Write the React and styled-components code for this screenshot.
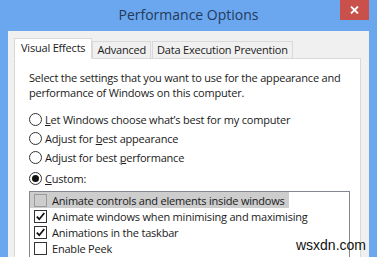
import React from 'react';
import styled, { createGlobalStyle } from 'styled-components';

const GlobalStyle = createGlobalStyle`
  html, body {
    margin: 0;
    padding: 0;
    background: #6aa7ef;
  }
  body {
    font-family: "Open Sans", "Noto Sans", sans-serif;
  }
`;

const tabs = [
  { name: 'Visual Effects', active: true },
  { name: 'Advanced' },
  { name: 'Data Execution Prevention' },
];

const radios = [
  { pre: '', key: 'L', post: 'et Windows choose what\u2019s best for my computer' },
  { pre: 'Adjust for ', key: 'b', post: 'est appearance' },
  { pre: 'Adjust for best ', key: 'p', post: 'erformance' },
  { pre: '', key: 'C', post: 'ustom:', checked: true },
];

const effects = [
  { label: 'Animate controls and elements inside windows', selected: true },
  { label: 'Animate windows when minimising and maximising', checked: true },
  { label: 'Animations in the taskbar', checked: true },
  { label: 'Enable Peek' },
];

function App() {
  return (
    <Window>
      <GlobalStyle />
      <TitleBar>
        <span />
        <Title>Performance Options</Title>
        <CloseButton>
          <svg width="9" height="8" viewBox="0 0 9 8">
            <path d="M1 0.5 L8 7.5 M8 0.5 L1 7.5" stroke="#fff" strokeWidth="1.8" />
          </svg>
        </CloseButton>
      </TitleBar>
      <Client>
        <TabStrip>
          {tabs.map((t) => (
            <Tab key={t.name} $active={t.active}>{t.name}</Tab>
          ))}
        </TabStrip>
        <Panel>
          <Description>
            Select the settings that you want to use for the appearance and
            performance of Windows on this computer.
          </Description>
          <RadioList>
            {radios.map((r, i) => (
              <RadioRow key={i} $last={i === radios.length - 1}>
                <Radio $checked={r.checked} />
                <span>
                  {r.pre}<u>{r.key}</u>{r.post}
                </span>
              </RadioRow>
            ))}
          </RadioList>
          <ListBox>
            {effects.map((e) => (
              <ListItem key={e.label} $selected={e.selected}>
                <CheckBox $selected={e.selected}>
                  {e.checked && (
                    <svg width="11" height="11" viewBox="0 0 11 11">
                      <path d="M1.8 5.6 L4.3 8.2 L9.3 2" fill="none" stroke="#111" strokeWidth="1.8" />
                    </svg>
                  )}
                </CheckBox>
                <span>{e.label}</span>
              </ListItem>
            ))}
          </ListBox>
        </Panel>
      </Client>
      <Watermark>wsxdn.com</Watermark>
    </Window>
  );
}

const Window = styled.div`
  position: relative;
  width: 377px;
  height: 257px;
  background: #6aa7ef;
  overflow: hidden;
  display: flex;
  flex-direction: column;
`;

const TitleBar = styled.div`
  height: 31px;
  display: grid;
  grid-template-columns: 1fr auto 1fr;
  align-items: start;
  flex-shrink: 0;
`;

const Title = styled.div`
  padding-top: 5px;
  font-size: 14px;
  color: #243a5a;
  line-height: 20px;
`;

const CloseButton = styled.div`
  justify-self: end;
  margin-right: 8px;
  width: 29px;
  height: 20px;
  background: #c9504b;
  display: flex;
  align-items: center;
  justify-content: center;
`;

const Client = styled.div`
  flex: 1;
  margin: 0 8px 0 8px;
  background: #f0f0f0;
  padding: 7px 8px 0 6px;
  display: flex;
  flex-direction: column;
  font-size: 11px;
  letter-spacing: -0.2px;
  color: #1a1a1a;
`;

const TabStrip = styled.div`
  display: flex;
  align-items: flex-end;
  height: 21px;
  margin-bottom: -1px;
  position: relative;
  z-index: 1;
`;

const Tab = styled.div`
  box-sizing: border-box;
  height: ${(p) => (p.$active ? '21px' : '18px')};
  padding: ${(p) => (p.$active ? '1px 6px 0' : '0 4px')};
  margin-right: ${(p) => (p.$active ? '0' : '1px')};
  border: 1px solid #d9d9d9;
  border-bottom: ${(p) => (p.$active ? '1px solid #fff' : '1px solid #d9d9d9')};
  background: ${(p) => (p.$active ? '#fff' : '#f0f0f0')};
  line-height: 16px;
  white-space: nowrap;
`;

const Panel = styled.div`
  flex: 1;
  background: #fff;
  border: 1px solid #d9d9d9;
  border-bottom: none;
  padding: 11px 11px 0 14px;
`;

const Description = styled.div`
  line-height: 15px;
  width: 320px;
`;

const RadioList = styled.div`
  margin-top: 10px;
  display: flex;
  flex-direction: column;
`;

const RadioRow = styled.div`
  display: flex;
  align-items: center;
  gap: 3px;
  height: ${(p) => (p.$last ? '21px' : '19px')};
  padding-top: ${(p) => (p.$last ? '2px' : '0')};
  box-sizing: border-box;
  u {
    text-decoration-thickness: 1px;
  }
`;

const Radio = styled.span`
  box-sizing: border-box;
  width: 13px;
  height: 13px;
  border-radius: 50%;
  border: 1px solid #333;
  background: #fff;
  display: flex;
  align-items: center;
  justify-content: center;
  &::after {
    content: '';
    width: 7px;
    height: 7px;
    border-radius: 50%;
    background: #111;
    display: ${(p) => (p.$checked ? 'block' : 'none')};
  }
`;

const ListBox = styled.div`
  margin-top: 3px;
  border: 1px solid #828790;
  border-bottom: none;
  height: 80px;
  width: 319px;
  display: flex;
  flex-direction: column;
`;

const ListItem = styled.div`
  display: flex;
  align-items: center;
  gap: 5px;
  height: 16px;
  padding-left: 4px;
  align-self: flex-start;
  padding-right: 4px;
  background: ${(p) => (p.$selected ? '#cdcdcd' : 'transparent')};
`;

const CheckBox = styled.span`
  box-sizing: border-box;
  width: 13px;
  height: 13px;
  border: 1px solid ${(p) => (p.$selected ? '#9a9a9a' : '#333')};
  background: ${(p) => (p.$selected ? '#cdcdcd' : '#fff')};
  display: flex;
  align-items: center;
  justify-content: center;
`;

const Watermark = styled.div`
  position: absolute;
  right: 11px;
  bottom: 4px;
  font-family: "Liberation Sans", Arial, sans-serif;
  font-size: 14px;
  color: #111;
`;

export default App;
